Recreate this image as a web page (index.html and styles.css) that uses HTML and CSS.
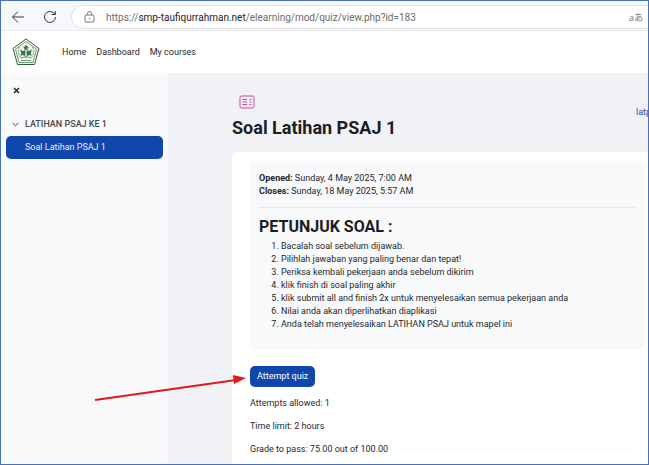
FILE: index.html
```html
<!DOCTYPE html>
<html lang="id">
<head>
  <meta charset="UTF-8">
  <meta name="viewport" content="width=device-width, initial-scale=1.0">
  <title>Soal Latihan PSAJ 1</title>
  <link rel="stylesheet" href="styles.css">
</head>
<body>
  <div class="window">
    <div class="browser-bar">
      <button type="button" class="bar-button" aria-label="Back">
        <svg width="14" height="14" viewBox="0 0 14 14"><path d="M13 7H1.5M7 1.5L1.500 7L7 12.500"/></svg>
      </button>
      <button type="button" class="bar-button" aria-label="Reload">
        <svg width="14" height="14" viewBox="0 0 14 14"><path d="M12.500 7A5.500 5.500 0 1 1 10.700 2.900L12.200 4.300M12.300 1V4.500H8.800"/></svg>
      </button>
      <div class="address">
        <svg class="lock" width="11" height="12" viewBox="0 0 11 12"><rect x="1" y="4" width="9" height="7" rx="1"/><path d="M3.500 4V2.500a2 2 0 0 1 4 0V4"/><circle cx="5.500" cy="7.500" r=".4"/></svg>
        <label for="url">https://<span class="host">smp-taufiqurrahman.net</span></label>
        <input type="text" id="url" value="/elearning/mod/quiz/view.php?id=183">
        <button type="button" class="translate" aria-label="Translate">aあ</button>
      </div>
    </div>

    <nav class="navbar">
      <a href="#" class="logo" aria-label="Home">
        <svg width="28" height="28" viewBox="0 0 28 28">
          <path class="shield" d="M14 1L27 10.500L22.500 26.500H5.500L1 10.500Z"/>
          <path class="shield thin" d="M14 3.500L24.500 11.200L21 24.500H7L3.500 11.200Z"/>
          <path class="thin" d="M7.500 9C5.500 12 6 17 9 20M20.500 9C22.500 12 22 17 19 20" stroke-dasharray="2 1"/>
          <path class="leaf" d="M14 6.500L15 8.500L17 9L15.500 10L16 12.500L14 11.300L12 12.500L12.500 10L11 9L13 8.500Z"/>
          <path class="leaf" d="M8 11.500L11 13L13 12.500V18L10.500 17L8 18L9.500 15.500ZM20 11.500L17 13L15 12.500V18L17.500 17L20 18L18.500 15.500Z"/>
          <path class="thin" d="M14 12V20M8.500 20Q14 17.500 19.500 20M9 22.500H19" />
        </svg>
      </a>
      <a href="#">Home</a>
      <a href="#">Dashboard</a>
      <a href="#">My courses</a>
    </nav>

    <div class="page">
      <aside class="sidebar">
        <button type="button" class="close" aria-label="Close">
          <svg width="7" height="7" viewBox="0 0 7 7"><path d="M1 1L6 6M6 1L1 6"/></svg>
        </button>
        <button type="button" class="section">
          <svg width="7" height="5" viewBox="0 0 7 5"><path d="M.7 1L3.500 3.800L6.300 1"/></svg>
          LATIHAN PSAJ KE 1
        </button>
        <a href="#" class="item active">Soal Latihan PSAJ 1</a>
      </aside>

      <main class="content">
        <header class="heading">
          <div>
            <svg class="quiz-icon" width="16" height="14" viewBox="0 0 16 14">
              <rect x="1" y="1" width="14" height="12" rx="1.500"/>
              <path d="M3.500 4.500H8M3.500 7H8M3.500 9.500H8M10.500 4.500H12.500M10.500 7H12.500M10.500 9.500H12.500"/>
            </svg>
            <h1>Soal Latihan PSAJ 1</h1>
          </div>
          <a href="#" class="crumb">latp</a>
        </header>

        <section class="card">
          <div class="info">
            <p><strong>Opened:</strong> Sunday, 4 May 2025, 7:00 AM</p>
            <p><strong>Closes:</strong> Sunday, 18 May 2025, 5:57 AM</p>
            <hr>
            <h2>PETUNJUK SOAL :</h2>
            <ol>
              <li>Bacalah soal sebelum dijawab.</li>
              <li>Pilihlah jawaban yang paling benar dan tepat!</li>
              <li>Periksa kembali pekerjaan anda sebelum dikirim</li>
              <li>klik finish di soal paling akhir</li>
              <li>klik submit all and finish 2x untuk menyelesaikan semua pekerjaan anda</li>
              <li>Nilai anda akan diperlihatkan diaplikasi</li>
              <li>Anda telah menyelesaikan LATIHAN PSAJ untuk mapel ini</li>
            </ol>
          </div>
          <button type="button" class="attempt">Attempt quiz</button>
          <div class="rules">
            <p>Attempts allowed: 1</p>
            <p>Time limit: 2 hours</p>
            <p>Grade to pass: 75.00 out of 100.00</p>
          </div>
        </section>
      </main>
    </div>

    <!-- arrow pointing at the attempt button -->
    <svg class="arrow" width="152" height="28" viewBox="0 0 152 28">
      <path class="line" d="M1 25L142 5"/>
      <path class="head" d="M152 3L139 0L140 9Z"/>
    </svg>
  </div>
</body>
</html>
```

FILE: styles.css
```css
* {
  box-sizing: border-box;
}
body {
  margin: 0;
  font-family: Roboto, Arial, sans-serif;
  font-size: 9px;
  line-height: 13px;
  color: #25282c;
}
a {
  color: inherit;
  text-decoration: none;
}
button, input {
  font: inherit;
  color: inherit;
  padding: 0;
  border: none;
  background: none;
}
button {
  cursor: pointer;
}
svg {
  display: block;
  fill: none;
  stroke: currentColor;
}
p, h1, h2, ol {
  margin: 0;
}
.window {
  position: relative;
  display: flex;
  flex-direction: column;
  height: 100vh;
  overflow: hidden;
  border: 1px solid #4a70b5;
}

/* browser bar */
.browser-bar {
  display: flex;
  align-items: center;
  gap: 18px;
  padding: 4px 0 1px 10px;
  background: #f7f8fb;
  border-bottom: 1px solid #eeeef0;
}
.bar-button {
  color: #333;
}
.address {
  display: flex;
  flex: 1;
  align-items: center;
  height: 24px;
  margin-left: -4px;
  padding: 0 5px 0 12px;
  background: #fff;
  border: 1px solid #e2e2e5;
  border-right: none;
  border-radius: 12px 0 0 12px;
  font-size: 10px;
  color: #6b6b6b;
}
.lock {
  margin-right: 11px;
  color: #777;
}
.host {
  color: #1c1c1c;
}
.address input {
  flex: 1;
  min-width: 0;
  outline: none;
}
.translate {
  font-family: "Open Sans", "Noto Sans CJK JP", sans-serif;
  font-size: 9px;
  color: #777;
}

/* site navigation */
.navbar {
  display: flex;
  align-items: center;
  gap: 10px;
  height: 42px;
  padding: 0 11px;
  background: #fff;
}
.logo {
  margin-right: 12px;
  color: #2c6233;
}
.shield {
  fill: #edf5ec;
}
.thin {
  stroke-width: 0.6;
}
.leaf {
  fill: #357440;
  stroke: none;
}
.page {
  display: flex;
  flex: 1;
  min-height: 0;
  background: #f1f2f5;
}

/* sidebar */
.sidebar {
  display: flex;
  flex-direction: column;
  align-items: flex-start;
  flex: 0 0 167px;
  padding: 14px 5px;
  background: #f8f9fb;
}
.close {
  margin: 0 7px 24px;
}
.close svg {
  stroke-width: 1.5;
}
.section {
  display: flex;
  align-items: center;
  gap: 6px;
  padding: 0 6px;
  margin-bottom: 5px;
  font-weight: 500;
  color: #44484d;
}
.item {
  width: 100%;
  padding: 5px 19px;
  border-radius: 5px;
}
.active {
  background: #0f47ad;
  color: #e9effb;
}

/* main content */
.content {
  flex: 1;
  min-width: 0;
  display: flex;
  flex-direction: column;
  padding: 22px 0 0 64px;
}
.heading {
  display: flex;
  justify-content: space-between;
}
.quiz-icon {
  margin: 0 7px 8px;
  color: #c9479f;
}
h1 {
  font-size: 18px;
  line-height: 22px;
  font-weight: 700;
  margin-bottom: 13px;
  color: #1b1e22;
}
.crumb {
  width: 12px;
  margin-top: 11px;
  overflow: hidden;
  color: #2c4f9c;
}
.card {
  flex: 1;
  padding: 9px 3px 0 18px;
  background: #fff;
  border-radius: 5px 0 0 0;
}
.info {
  padding: 11px 9px 19px;
  background: #f8f9fb;
  border-radius: 5px;
}
hr {
  margin: 9px 0;
  border: none;
  border-top: 1px solid #e6e8eb;
}
h2 {
  font-size: 16px;
  line-height: 20px;
  font-weight: 700;
  margin-bottom: 3px;
  color: #1b1e22;
}
ol {
  padding-left: 22px;
}
.attempt {
  margin: 16px 0 10px;
  padding: 4px 7px;
  background: #0f47ad;
  color: #fff;
  border-radius: 5px;
}
.rules {
  display: flex;
  flex-direction: column;
  gap: 10px;
}

.arrow {
  position: absolute;
  left: 93px;
  top: 374px;
  color: #e01b1f;
}
.line {
  stroke-width: 2;
}
.head {
  fill: currentColor;
  stroke: none;
}
```
